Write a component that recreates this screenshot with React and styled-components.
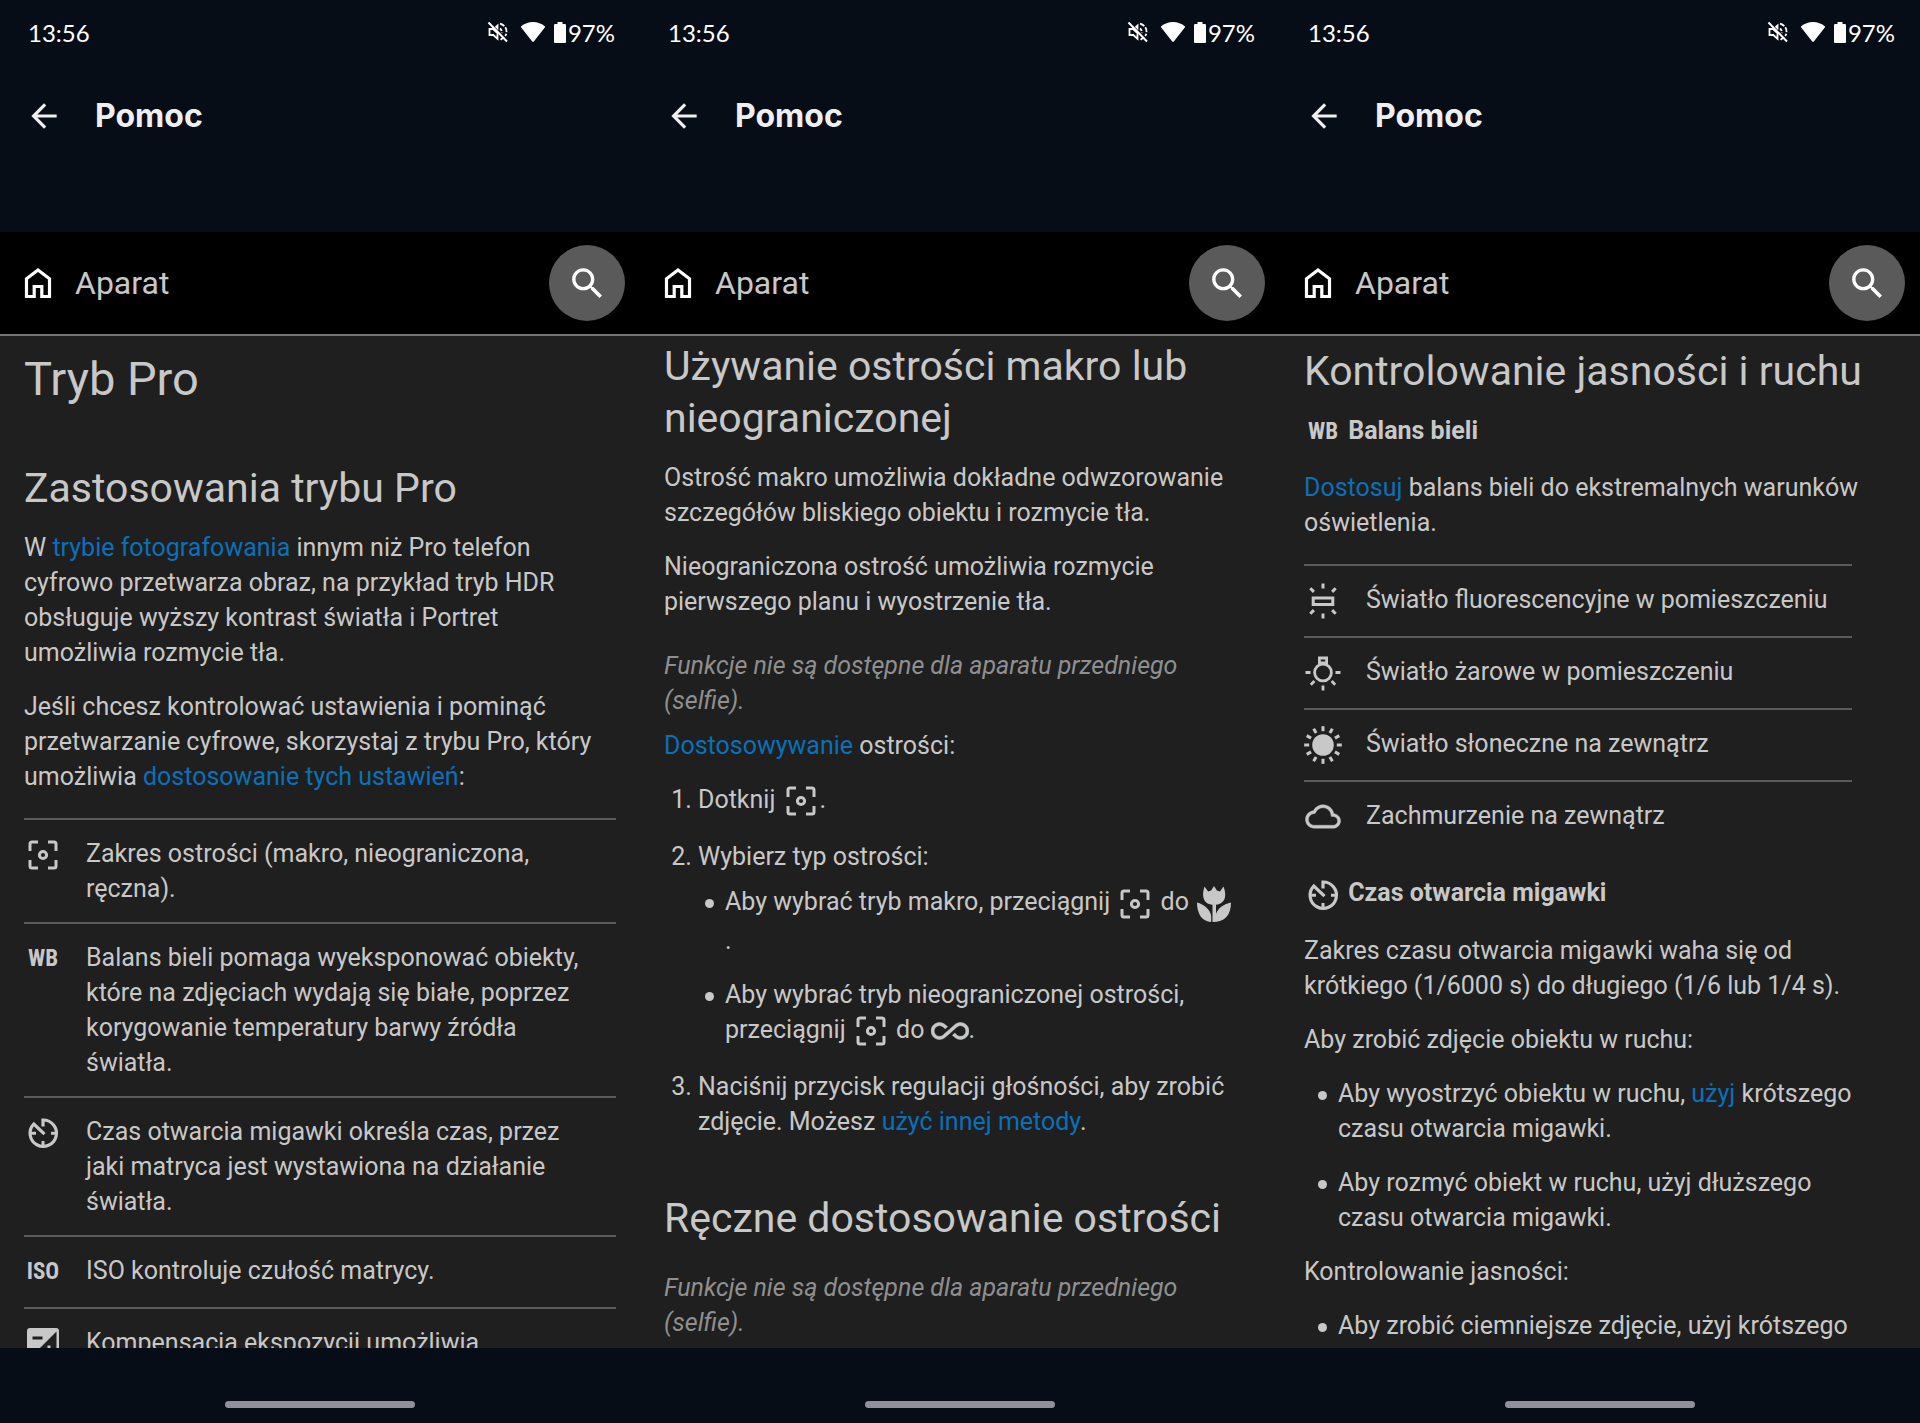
import React from "react";
import styled, { createGlobalStyle } from "styled-components";

const GlobalStyle = createGlobalStyle`
  * {
    box-sizing: border-box;
  }

  body {
    margin: 0;
    background-color: #060d16;
  }
`;

const Wrapper = styled.div`
  display: flex;
  height: 100vh;
`;

const Screen = styled.section`
  flex: 1;
  min-width: 0;
  display: flex;
  flex-direction: column;
  font-family: Roboto, "Liberation Sans", sans-serif;
  background-color: #060d16;
`;

const StatusRow = styled.div`
  display: flex;
  align-items: center;
  justify-content: space-between;
  height: 64px;
  padding: 0 25px 0 28px;
  font-family: Lato, sans-serif;
  font-size: 24px;
  color: #fff;
`;

const StatusIcons = styled.div`
  display: flex;
  align-items: center;
  gap: 12px;
`;

const Battery = styled.span`
  display: flex;
  align-items: center;
  gap: 2px;
  margin-left: -3px;
`;

const TitleBar = styled.header`
  display: flex;
  align-items: center;
  gap: 32px;
  height: 104px;
  margin-bottom: 64px;
  padding: 0 25px;
`;

const BackButton = styled.button`
  display: flex;
  padding: 0;
  border: none;
  background: none;
  color: #f0efef;
  cursor: pointer;
`;

const Title = styled.span`
  font-family: Inter, sans-serif;
  font-size: 32px;
  font-weight: 700;
  line-height: 38px;
  color: #f0efef;
`;

const AppBar = styled.div`
  display: flex;
  align-items: center;
  justify-content: space-between;
  height: 104px;
  padding: 0 15px 0 24px;
  border-bottom: 2px solid #757575;
  background-color: #000;
`;

const HomeLink = styled.a`
  display: flex;
  align-items: center;
  gap: 23px;
  font-size: 32px;
  color: #c8c8c8;
  text-decoration: none;
`;

const SearchButton = styled.button`
  display: flex;
  align-items: center;
  justify-content: center;
  width: 76px;
  height: 76px;
  padding: 0;
  border: none;
  border-radius: 50%;
  background-color: #5a5a5a;
  color: #fff;
  cursor: pointer;
`;

const Content = styled.main`
  flex: 1;
  min-height: 0;
  overflow: hidden;
  padding: ${({ $top }) => $top}px 24px 0;
  background-color: #1f1f1f;
  color: #c8c8c8;
  font-size: 25px;
  line-height: 35px;
`;

const H1 = styled.h1`
  margin: 0 0 54px;
  font-size: 47px;
  font-weight: 400;
  line-height: 58px;
`;

const H2 = styled.h2`
  margin: ${({ $spaced }) => ($spaced ? "53px 0 26px" : "0 0 16px")};
  font-size: 41px;
  font-weight: 400;
  line-height: 52px;
`;

const H3 = styled.h3`
  margin: 0 0 19px;
  font-size: 25px;
  font-weight: 700;
`;

const Paragraph = styled.p`
  margin: 0 0 19px;
`;

const Note = styled.p`
  margin: 29px 0 10px;
  font-style: italic;
  color: #8f8f8f;

  h2 + & {
    margin-top: 0;
  }
`;

const Link = styled.a`
  color: #0b70b8;
  text-decoration: none;
`;

const Steps = styled.ol`
  margin: 0 0 19px;
  padding-left: 34px;

  > li + li {
    margin-top: 19px;
  }
`;

const BulletList = styled.ul`
  margin: ${({ $nested }) => ($nested ? "10px 0 0" : "0 0 19px")};
  padding: ${({ $nested }) => ($nested ? "0 0 0 27px" : "0 24px 0 34px")};
  list-style: none;
`;

const Bullet = styled.li`
  & + & {
    margin-top: 19px;
  }

  &::before {
    content: "";
    display: inline-block;
    width: 9px;
    height: 9px;
    margin: 0 11px 0 -20px;
    border-radius: 50%;
    background-color: #c8c8c8;
    vertical-align: middle;
  }
`;

const Table = styled.table`
  margin: 24px 0 23px;
  border-spacing: 0;
`;

const Cell = styled.td`
  padding: 16px 24px 16px 0;
  border-top: 2px solid #5a5a5a;
  vertical-align: top;
`;

const IconCell = styled(Cell)`
  line-height: 0;
`;

const Icon = styled.svg`
  width: 38px;
  height: 38px;
  vertical-align: middle;
`;

const TextIcon = styled.span`
  display: inline-flex;
  align-items: center;
  justify-content: center;
  width: 38px;
  height: 38px;
  vertical-align: middle;
  font-family: "Liberation Sans Narrow", "Roboto Condensed", Roboto, sans-serif;
  font-size: 23px;
  font-weight: 700;
  line-height: 38px;
`;

const NavBar = styled.div`
  display: flex;
  align-items: flex-end;
  justify-content: center;
  height: 75px;
  padding-bottom: 15px;
`;

const Handle = styled.div`
  width: 190px;
  height: 7px;
  border-radius: 4px;
  background-color: #8e9199;
`;

const FocusIcon = () => (
  <Icon viewBox="0 0 38 38" role="img" aria-label="ostrość">
    <g fill="none" stroke="currentColor" strokeWidth="3">
      <path d="M6 15V8a2 2 0 0 1 2-2h6M24 6h6a2 2 0 0 1 2 2v7M32 24v6a2 2 0 0 1-2 2h-6M14 32H8a2 2 0 0 1-2-2v-6" />
      <circle cx="19" cy="19" r="3.6" />
    </g>
  </Icon>
);

const ShutterIcon = () => (
  <Icon viewBox="0 0 38 38" aria-hidden="true">
    <g fill="none" stroke="currentColor" strokeWidth="3.2">
      <path d="M19 12.5V6A13.2 13.2 0 1 1 9.8 10L20.5 20.2" />
      <path d="M19 32v-5M7 19.2h5M32 19.2h-5" strokeWidth="3" />
    </g>
  </Icon>
);

const ExposureIcon = () => (
  <Icon viewBox="0 0 38 38" aria-hidden="true">
    <path
      fill="currentColor"
      fillRule="evenodd"
      d="M6 3h26a3 3 0 0 1 3 3v26a3 3 0 0 1-3 3H6a3 3 0 0 1-3-3V6a3 3 0 0 1 3-3zM32.5 6.5l-26 26h26zM8.5 11.5h10v3h-10z"
    />
    <path d="M23.5 20.5h3V24H30v3h-3.5v3.5h-3V27H20v-3h3.5z" fill="currentColor" />
  </Icon>
);

const TulipIcon = () => (
  <Icon viewBox="0 0 38 38" role="img" aria-label="makro">
    <g fill="currentColor">
      <path d="M9.5 1.5l3.6 5 3-1L19 1l2.9 4.5 3 1 3.6-5c3 8 3 17-7.5 18.2v9.3C23 23 29 19 36 17.5 36 30 30 37 17.5 37V19.7C7 19 7 9 9.5 1.5z" />
      <path d="M2 17.5C9 19.5 15 24 16.2 31v6C7 36.5 2 29 2 17.5z" />
    </g>
  </Icon>
);

const InfinityIcon = () => (
  <Icon viewBox="0 0 24 24" role="img" aria-label="nieskończoność">
    <path
      fill="currentColor"
      stroke="currentColor"
      strokeWidth=".3"
      d="M18.6 6.62c-1.44 0-2.8.56-3.77 1.53L12 10.66 10.48 12h.01L7.8 14.39c-.64.64-1.49.99-2.4.99-1.87 0-3.39-1.51-3.39-3.38S3.53 8.62 5.4 8.62c.91 0 1.76.35 2.44 1.03l1.13 1 1.51-1.34L9.22 8.2C8.2 7.18 6.84 6.62 5.4 6.62 2.42 6.62 0 9.04 0 12s2.42 5.38 5.4 5.38c1.44 0 2.8-.56 3.77-1.53l2.83-2.5.01.01L13.52 12h-.01l2.69-2.39c.64-.64 1.49-.99 2.4-.99 1.87 0 3.39 1.51 3.39 3.38s-1.52 3.38-3.39 3.38c-.9 0-1.76-.35-2.44-1.03l-1.14-1.01-1.51 1.34 1.27 1.12c1.02 1.01 2.37 1.57 3.82 1.57 2.98 0 5.4-2.41 5.4-5.38s-2.42-5.37-5.4-5.37z"
    />
  </Icon>
);

const FluorescentIcon = () => (
  <Icon viewBox="0 0 38 38" aria-hidden="true">
    <g fill="none" stroke="currentColor" strokeWidth="3">
      <path d="M9.2 16h19.6v6.4H9.2z" />
      <path d="M19 1.5v5M19 31.5v5M6.3 6.3l3.6 3.6M31.7 6.3l-3.6 3.6M6.3 31.7l3.6-3.6M31.7 31.7l-3.6-3.6" />
    </g>
  </Icon>
);

const BulbIcon = () => (
  <Icon viewBox="0 0 38 38" aria-hidden="true">
    <g fill="none" stroke="currentColor" strokeWidth="2.8">
      <path d="M15.4 10.5V4h7.2v6.5M15 9h8" />
      <circle cx="19" cy="18.5" r="8.4" />
      <path d="M1.5 18.5h5M31.5 18.5h5M19 31.5v5M6.8 30.7l3.6-3.6M31.2 30.7l-3.6-3.6" />
    </g>
  </Icon>
);

const SunIcon = () => (
  <Icon viewBox="0 0 38 38" aria-hidden="true">
    <circle cx="19" cy="19" r="10.8" fill="currentColor" />
    <g stroke="currentColor" strokeWidth="3">
      {[0, 30, 60, 90, 120, 150, 180, 210, 240, 270, 300, 330].map((angle) => (
        <path key={angle} d="M19 .2v5" transform={`rotate(${angle} 19 19)`} />
      ))}
    </g>
  </Icon>
);

const CloudIcon = () => (
  <Icon viewBox="0 0 38 38" aria-hidden="true">
    <path
      fill="currentColor"
      stroke="currentColor"
      strokeWidth=".3"
      transform="translate(1.5 1) scale(1.46)"
      d="M19.35 10.04C18.67 6.59 15.64 4 12 4 9.11 4 6.6 5.64 5.35 8.04 2.34 8.36 0 10.91 0 14c0 3.31 2.69 6 6 6h13c2.76 0 5-2.24 5-5 0-2.64-2.05-4.78-4.65-4.96zM19 18H6c-2.21 0-4-1.79-4-4 0-2.05 1.53-3.76 3.56-3.97l1.07-.11.5-.95C8.08 7.14 9.94 6 12 6c2.62 0 4.88 1.86 5.39 4.43l.3 1.5 1.53.11c1.56.1 2.78 1.41 2.78 2.96 0 1.65-1.35 3-3 3z"
    />
  </Icon>
);

const StatusBar = () => (
  <StatusRow>
    <span>13:56</span>
    <StatusIcons>
      <svg width="22" height="22" viewBox="0 0 22 22" aria-hidden="true">
        <g fill="none" stroke="#fff" strokeWidth="1.8">
          <path d="M2.5 8v6h3.8l4.2 3.8V12L6 8zM8.5 6.5l2-1.9v3.8" />
          <path d="M13 7.5c1.6 1.2 2 3 1.8 4.6" strokeDasharray="3 1.5" />
          <path d="M13 2.6c4.6 1.4 7 5 6.5 9-.2 1.4-.6 2.5-1.3 3.5M16 17l-2.5 1.8" strokeDasharray="5 1.6" />
          <path d="M1.5 1.5l18.5 19" strokeWidth="2" />
        </g>
      </svg>
      <svg width="24" height="20" viewBox="0 0 24 20" aria-hidden="true">
        <path
          d="M12 0C7.5 0 3.2 1.6.2 4.3c-.4.4-.3.8 0 1.2l11 13.9c.5.6 1.1.6 1.6 0l11-13.9c.3-.4.4-.8 0-1.2C20.8 1.6 16.5 0 12 0z"
          fill="#fff"
        />
      </svg>
      <Battery>
        <svg width="12" height="21" viewBox="0 0 12 21" aria-hidden="true">
          <path d="M3.5 0h5v2H11a1 1 0 0 1 1 1v17a1 1 0 0 1-1 1H1a1 1 0 0 1-1-1V3a1 1 0 0 1 1-1h2.5z" fill="#fff" />
        </svg>
        97%
      </Battery>
    </StatusIcons>
  </StatusRow>
);

const Phone = ({ top, children }) => (
  <Screen>
    <StatusBar />
    <TitleBar>
      <BackButton aria-label="Wstecz">
        <svg width="38" height="38" viewBox="0 0 24 24" aria-hidden="true">
          <path d="M20 11H7.83l5.59-5.59L12 4l-8 8 8 8 1.41-1.41L7.83 13H20v-2z" fill="currentColor" />
        </svg>
      </BackButton>
      <Title>Pomoc</Title>
    </TitleBar>
    <AppBar>
      <HomeLink href="#">
        <svg width="28" height="32" viewBox="0 0 28 32" aria-hidden="true">
          <path
            d="M2.5 29.5V11.8L14 3l11.5 8.8v17.7h-7.7v-10h-7.6v10z"
            fill="none"
            stroke="#fff"
            strokeWidth="3.2"
          />
        </svg>
        Aparat
      </HomeLink>
      <SearchButton aria-label="Szukaj">
        <svg width="41" height="41" viewBox="0 0 24 24" aria-hidden="true">
          <path
            d="M15.5 14h-.79l-.28-.27C15.41 12.59 16 11.11 16 9.5 16 5.91 13.09 3 9.5 3S3 5.91 3 9.5 5.91 16 9.5 16c1.61 0 3.09-.59 4.23-1.57l.27.28v.79l5 4.99L20.49 19l-4.99-5zm-6 0C7.01 14 5 11.99 5 9.5S7.01 5 9.5 5 14 7.01 14 9.5 11.99 14 9.5 14z"
            fill="currentColor"
          />
        </svg>
      </SearchButton>
    </AppBar>
    <Content $top={top}>{children}</Content>
    <NavBar>
      <Handle />
    </NavBar>
  </Screen>
);

const settings = [
  [<FocusIcon />, "Zakres ostrości (makro, nieograniczona, ręczna)."],
  [
    <TextIcon>WB</TextIcon>,
    "Balans bieli pomaga wyeksponować obiekty, które na zdjęciach wydają się białe, poprzez korygowanie temperatury barwy źródła światła.",
  ],
  [<ShutterIcon />, "Czas otwarcia migawki określa czas, przez jaki matryca jest wystawiona na działanie światła."],
  [<TextIcon>ISO</TextIcon>, "ISO kontroluje czułość matrycy."],
  [<ExposureIcon />, "Kompensacja ekspozycji umożliwia"],
];

const balances = [
  [<FluorescentIcon />, "Światło fluorescencyjne w pomieszczeniu"],
  [<BulbIcon />, "Światło żarowe w pomieszczeniu"],
  [<SunIcon />, "Światło słoneczne na zewnątrz"],
  [<CloudIcon />, "Zachmurzenie na zewnątrz"],
];

const IconTable = ({ rows }) => (
  <Table>
    <tbody>
      {rows.map(([icon, text]) => (
        <tr key={text}>
          <IconCell>{icon}</IconCell>
          <Cell>{text}</Cell>
        </tr>
      ))}
    </tbody>
  </Table>
);

const App = () => {
  return (
    <>
      <GlobalStyle />
      <Wrapper>
        <Phone top={14}>
          <H1>Tryb Pro</H1>
          <H2>Zastosowania trybu Pro</H2>
          <Paragraph>
            W <Link href="#">trybie fotografowania</Link> innym niż Pro telefon cyfrowo przetwarza
            obraz, na przykład tryb HDR obsługuje wyższy kontrast światła i Portret umożliwia rozmycie
            tła.
          </Paragraph>
          <Paragraph>
            Jeśli chcesz kontrolować ustawienia i pominąć przetwarzanie cyfrowe, skorzystaj z trybu Pro,
            który umożliwia <Link href="#">dostosowanie tych ustawień</Link>:
          </Paragraph>
          <IconTable rows={settings} />
        </Phone>

        <Phone top={4}>
          <H2>Używanie ostrości makro lub nieograniczonej</H2>
          <Paragraph>
            Ostrość makro umożliwia dokładne odwzorowanie szczegółów bliskiego obiektu i rozmycie tła.
          </Paragraph>
          <Paragraph>Nieograniczona ostrość umożliwia rozmycie pierwszego planu i wyostrzenie tła.</Paragraph>
          <Note>Funkcje nie są dostępne dla aparatu przedniego (selfie).</Note>
          <Paragraph>
            <Link href="#">Dostosowywanie</Link> ostrości:
          </Paragraph>
          <Steps>
            <li>
              Dotknij <FocusIcon />.
            </li>
            <li>
              Wybierz typ ostrości:
              <BulletList $nested>
                <Bullet>
                  Aby wybrać tryb makro, przeciągnij <FocusIcon /> do <TulipIcon />
                  <br />.
                </Bullet>
                <Bullet>
                  Aby wybrać tryb nieograniczonej ostrości, przeciągnij <FocusIcon /> do <InfinityIcon />.
                </Bullet>
              </BulletList>
            </li>
            <li>
              Naciśnij przycisk regulacji głośności, aby zrobić zdjęcie. Możesz{" "}
              <Link href="#">użyć innej metody</Link>.
            </li>
          </Steps>
          <H2 $spaced>Ręczne dostosowanie ostrości</H2>
          <Note>Funkcje nie są dostępne dla aparatu przedniego (selfie).</Note>
        </Phone>

        <Phone top={9}>
          <H2>Kontrolowanie jasności i ruchu</H2>
          <H3>
            <TextIcon>WB</TextIcon> Balans bieli
          </H3>
          <Paragraph>
            <Link href="#">Dostosuj</Link> balans bieli do ekstremalnych warunków oświetlenia.
          </Paragraph>
          <IconTable rows={balances} />
          <H3>
            <ShutterIcon /> Czas otwarcia migawki
          </H3>
          <Paragraph>
            Zakres czasu otwarcia migawki waha się od krótkiego (1/6000 s) do długiego (1/6 lub 1/4 s).
          </Paragraph>
          <Paragraph>Aby zrobić zdjęcie obiektu w ruchu:</Paragraph>
          <BulletList>
            <Bullet>
              Aby wyostrzyć obiektu w ruchu, <Link href="#">użyj</Link> krótszego czasu otwarcia migawki.
            </Bullet>
            <Bullet>Aby rozmyć obiekt w ruchu, użyj dłuższego czasu otwarcia migawki.</Bullet>
          </BulletList>
          <Paragraph>Kontrolowanie jasności:</Paragraph>
          <BulletList>
            <Bullet>Aby zrobić ciemniejsze zdjęcie, użyj krótszego</Bullet>
          </BulletList>
        </Phone>
      </Wrapper>
    </>
  );
};

export default App;
